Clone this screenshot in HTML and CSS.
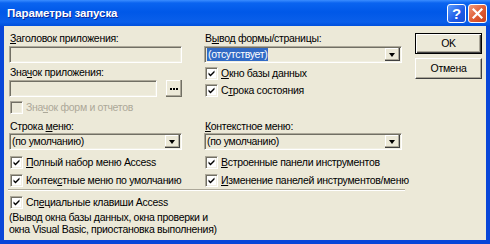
FILE: index.html
```html
<!DOCTYPE html>
<html lang="ru">
<head>
<meta charset="utf-8">
<title>Параметры запуска</title>
<link rel="stylesheet" href="styles.css">
</head>
<body>
<div class="window">
  <div class="titlebar">
    <span class="title">Параметры запуска</span>
    <span class="tbtn help">?</span>
    <span class="tbtn close"><svg width="11" height="11" viewBox="0 0 11 11"><path d="M1.5 1.5 L9.5 9.5 M9.5 1.5 L1.5 9.5" stroke="#fff" stroke-width="2.2" stroke-linecap="square"/></svg></span>
  </div>
  <div class="client">
    <div class="main">
      <div class="cols">
        <div class="col left">
          <div class="lbl"><u>З</u>аголовок приложения:</div>
          <div class="field mt1"></div>
          <div class="lbl mt3">Зна<u>ч</u>ок приложения:</div>
          <div class="fieldrow mt1">
            <div class="field grow"></div>
            <div class="dots"><i></i><i></i><i></i></div>
          </div>
          <div class="chk disabled mt4"><span class="box"></span><span>Зна<u>ч</u>ок форм и отчетов</span></div>
          <div class="lbl mt6">Строка <u>м</u>еню:</div>
          <div class="combo"><span class="val">(по умолчанию)</span><span class="drop"><span class="tri"></span></span></div>
          <div class="chk mt6"><span class="box on"></span><span><u>П</u>олный набор меню Access</span></div>
          <div class="chk mt5"><span class="box on"></span><span>Контек<u>с</u>тные меню по умолчанию</span></div>
        </div>
        <div class="col right">
          <div class="lbl">В<u>ы</u>вод формы/страницы:</div>
          <div class="combo mt1"><span class="val"><span class="sel">(отсутствует)</span></span><span class="drop"><span class="tri"></span></span></div>
          <div class="chk mt4"><span class="box on"></span><span><u>О</u>кно базы данных</span></div>
          <div class="chk mt4"><span class="box on"></span><span>С<u>т</u>рока состояния</span></div>
          <div class="lbl mt23"><u>К</u>онтекстное меню:</div>
          <div class="combo"><span class="val">(по умолчанию)</span><span class="drop"><span class="tri"></span></span></div>
          <div class="chk mt6"><span class="box on"></span><span><u>В</u>строенные панели инструментов</span></div>
          <div class="chk mt5"><span class="box on"></span><span><u>И</u>зменение панелей инструментов/меню</span></div>
        </div>
      </div>
      <div class="sep"></div>
      <div class="chk mt5"><span class="box on"></span><span>Сп<u>е</u>циальные клавиши Access</span></div>
      <div class="desc">(Вывод окна базы данных, окна проверки и<br>окна Visual Basic, приостановка выполнения)</div>
    </div>
    <div class="btns">
      <div class="btn default">OK</div>
      <div class="btn">Отмена</div>
    </div>
  </div>
</div>
</body>
</html>
```
FILE: styles.css
```css
html, body {
  margin: 0;
  padding: 0;
}
.window {
  width: 490px;
  height: 244px;
  display: flex;
  flex-direction: column;
  font-family: "Liberation Sans", Tahoma, sans-serif;
  font-size: 10.5px;
  letter-spacing: -0.3px;
  line-height: 13px;
  color: #000;
}
.titlebar {
  height: 26px;
  flex: none;
  box-sizing: border-box;
  display: flex;
  align-items: center;
  padding: 0 3px 0 7px;
  background: linear-gradient(to bottom, #3b8dff 0px, #0a64f0 3px, #0058e8 12px, #0a5fea 22px, #0050dc 26px);
}
.title {
  flex: 1;
  color: #fff;
  font-weight: bold;
  font-size: 11.5px;
  letter-spacing: -0.1px;
  text-shadow: 1px 1px #0a2a9a;
}
.tbtn {
  width: 19px;
  height: 19px;
  box-sizing: border-box;
  border: 1px solid #fff;
  border-radius: 3px;
  margin-left: 2px;
  display: flex;
  align-items: center;
  justify-content: center;
  color: #fff;
  letter-spacing: 0;
}
.help {
  background: linear-gradient(135deg, #5a9cff, #1d5ae6 60%, #1a4fd6);
  font-weight: bold;
  font-size: 15px;
  line-height: 17px;
}
.close {
  background: linear-gradient(135deg, #f09a7c, #df5a32 55%, #c9421e);
}
.client {
  flex: 1;
  display: flex;
  background: #ece9d8;
  border-style: solid;
  border-color: #0846d8;
  border-width: 0 4px 4px 4px;
  padding: 6px 4px 0 5px;
}
.main {
  width: 393px;
  display: flex;
  flex-direction: column;
}
.cols {
  display: flex;
  gap: 22px;
}
.col {
  display: flex;
  flex-direction: column;
}
.left { width: 173px; }
.right { width: 198px; }
.lbl { height: 13px; white-space: nowrap; padding-left: 1px; }
.mt1 { margin-top: 1px; }
.mt3 { margin-top: 3px; }
.mt4 { margin-top: 4px; }
.mt5 { margin-top: 5px; }
.mt6 { margin-top: 6px; }
.mt23 { margin-top: 23px; }
.field, .combo {
  height: 17px;
  box-sizing: border-box;
  border-top: 1px solid #aca899;
  border-left: 1px solid #aca899;
  border-bottom: 1px solid #fff;
  border-right: 1px solid #fff;
  box-shadow: inset 1px 1px #716f64, inset -1px -1px #f1efe2;
  background: #ece9d8;
}
.fieldrow {
  display: flex;
  gap: 9px;
}
.grow { flex: 1; }
.dots {
  width: 16px;
  height: 17px;
  box-sizing: border-box;
  border-right: 1px solid #716f64;
  border-bottom: 1px solid #716f64;
  box-shadow: inset -1px -1px #aca899, inset 1px 1px #fff;
  display: flex;
  align-items: center;
  justify-content: center;
  gap: 1px;
  padding-top: 1px;
}
.dots i {
  width: 2px;
  height: 2px;
  background: #000;
}
.combo {
  display: flex;
  align-items: stretch;
  padding: 1px;
}
.val {
  flex: 1;
  display: flex;
  align-items: center;
  padding-left: 1px;
  white-space: nowrap;
}
.sel {
  background: #316ac5;
  color: #fff;
  line-height: 13px;
  padding: 0 1px;
}
.drop {
  width: 15px;
  box-sizing: border-box;
  border-right: 1px solid #404040;
  border-bottom: 1px solid #404040;
  box-shadow: inset -1px -1px #aca899, inset 1px 1px #fff;
  display: flex;
  align-items: center;
  justify-content: center;
}
.tri {
  width: 0;
  height: 0;
  border-left: 3.5px solid transparent;
  border-right: 3.5px solid transparent;
  border-top: 4px solid #000;
  margin-top: 1px;
}
.chk {
  display: flex;
  align-items: center;
  gap: 3px;
  height: 13px;
  padding-left: 1px;
  white-space: nowrap;
}
.box {
  width: 13px;
  height: 13px;
  box-sizing: border-box;
  flex: none;
  border-top: 1px solid #aca899;
  border-left: 1px solid #aca899;
  border-bottom: 1px solid #fff;
  border-right: 1px solid #fff;
  box-shadow: inset 1px 1px #716f64, inset -1px -1px #f1efe2;
  background: #fff;
}
.box.on {
  background: #fff url("data:image/svg+xml,%3Csvg xmlns='http://www.w3.org/2000/svg' width='11' height='11'%3E%3Cpath d='M2.5 4.5 L4.5 6.5 L8.5 2.5 L8.5 4.5 L4.5 8.5 L2.5 6.5 Z' fill='%23000'/%3E%3C/svg%3E") center/11px 11px no-repeat;
}
.disabled {
  color: #aca899;
}
.disabled .box {
  background: #ece9d8;
}
.sep {
  height: 2px;
  margin: 2px -3px 0 -1px;
  border-top: 1px solid #aca899;
  border-bottom: 1px solid #fff;
  box-sizing: border-box;
}
.desc {
  margin-top: 2px;
  line-height: 12px;
  white-space: nowrap;
}
.btns {
  width: 67px;
  margin-left: 13px;
  display: flex;
  flex-direction: column;
  gap: 4px;
  padding-top: 1px;
}
.btn {
  height: 21px;
  box-sizing: border-box;
  display: flex;
  align-items: center;
  justify-content: center;
  border-top: 1px solid #fff;
  border-left: 1px solid #fff;
  border-right: 1px solid #404040;
  border-bottom: 1px solid #404040;
  box-shadow: inset -1px -1px #aca899;
}
.btn.default {
  border: 1px solid #000;
  box-shadow: inset 1px 1px #fff, inset -1px -1px #404040, inset -2px -2px #aca899;
}
```
